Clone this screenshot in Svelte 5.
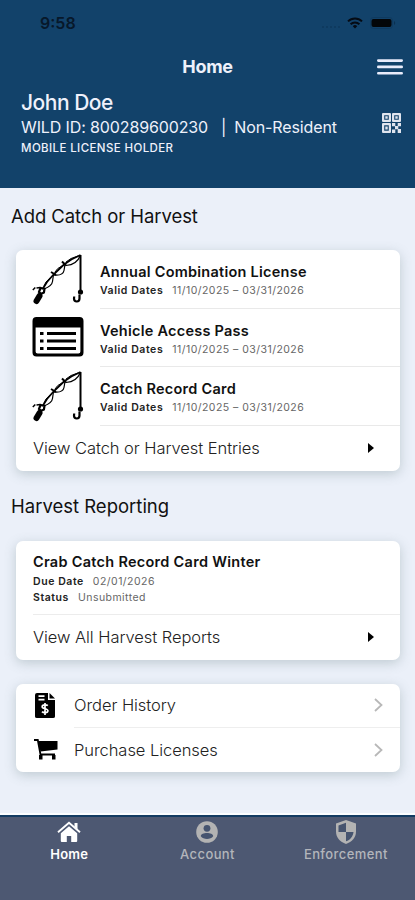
<script>
	const licenses = [
		{ name: 'Annual Combination License', icon: 'rod', dates: '11/10/2025 – 03/31/2026' },
		{ name: 'Vehicle Access Pass', icon: 'pass', dates: '11/10/2025 – 03/31/2026' },
		{ name: 'Catch Record Card', icon: 'rod', dates: '11/10/2025 – 03/31/2026' }
	];
</script>

<div class="screen">
	<header>
		<div class="status-bar">
			<span class="time">9:58</span>
			<div class="status-icons">
				<span class="signal"></span>
				<svg width="16" height="12" viewBox="0 0 16 12" fill="none" stroke="#050b14" stroke-width="2">
					<path d="M1 4.4a10 10 0 0 1 14 0M3.6 7.2a6.3 6.3 0 0 1 8.8 0" />
					<path d="M8 11.5 5.8 9.3a3 3 0 0 1 4.4 0z" fill="#050b14" stroke="none" />
				</svg>
				<svg class="battery" width="26" height="12" viewBox="0 0 26 12">
					<rect x=".5" y=".5" width="22" height="11" rx="3" fill="none" stroke="#0f3a5f" />
					<rect x="1.5" y="2" width="20" height="8" rx="2" fill="#030609" />
					<path d="M24 4v4c1.6-.6 1.6-3.4 0-4z" fill="#0b3151" />
				</svg>
			</div>
		</div>
		<div class="title-bar">
			<h1>Home</h1>
			<svg class="menu" width="26" height="16" viewBox="0 0 26 16" stroke="#e9ecfb" stroke-width="2.6" stroke-linecap="round">
				<path d="M1.3 1.6h23.4M1.3 7.9h23.4M1.3 14.2h23.4" />
			</svg>
		</div>
		<div class="holder">
			<div>
				<div class="holder-name">John Doe</div>
				<div class="holder-id"><span>WILD ID: 800289600230</span><span class="bar">|</span><span>Non-Resident</span></div>
				<div class="holder-type">MOBILE LICENSE HOLDER</div>
			</div>
			<svg class="qr" width="19" height="20" viewBox="0 0 19 20" fill="#dfe4ee">
				<path fill-rule="evenodd" d="M0 1q0-1 1-1h7q1 0 1 1v7q0 1-1 1H1q-1 0-1-1zM2.200 2.200v4.600h4.600V2.200zM10 1q0-1 1-1h7q1 0 1 1v7q0 1-1 1h-7q-1 0-1-1zM12.200 2.200v4.600h4.600V2.200zM0 11q0-1 1-1h7q1 0 1 1v8q0 1-1 1H1q-1 0-1-1zM2.200 12.200v5.600h4.600v-5.600z" />
				<path d="M3.300 3.300h2.400v2.400H3.300zM13.300 3.300h2.400v2.400h-2.400zM3.300 13.500h2.400v3H3.300zM10 10h3.300v3.300H10zM15.700 10H19v3.300h-3.300zM13 13h3.300v3.300H13zM10 16.500h3.300V20H10zM15.700 16H19v4h-3.300z" />
			</svg>
		</div>
	</header>

	<main>
		<h2>Add Catch or Harvest</h2>
		<section class="card">
			{#each licenses as license}
				<div class="license">
					<div class="license-icon">
						{#if license.icon === 'rod'}
							<svg width="52" height="53" viewBox="0 0 52 53" fill="none" stroke="#000">
								<path d="M48.500 2v37" stroke-width="2" />
								<path d="M10 37 15 29 22 21 32 11.500Q39 6 48.500 2" stroke-width="1.800" />
								<path d="M12 36q8-3 8.500-7.500.5-3.500 1-7M22 22q9 1 10-4.500.5-3 1-6M34 12.500q11-1 14-9.500" stroke-width="1.200" />
								<path d="M19 19l5 3M30 8.500l4 4" stroke-width="2" />
								<path d="M12 33q1-4 6-8M23 19q2-4 7-6M34 9q4-4 12-6" stroke-width="1" />
								<path d="M.8 37l2.500-2.500M4.500 35l4-.5" stroke-width="1.500" />
								<path d="M7.500 43 4.500 48" stroke-width="6" stroke-linecap="round" />
								<path d="M7 39l1.500-4 4 .8-.6 3.700-3 1.500z" fill="#fff" stroke-width="2.200" />
								<circle cx="48.500" cy="39" r="2.600" fill="#000" stroke="none" />
								<path d="M47.500 41.500v4q0 3-2.700 3-2.800 0-2.800-3l.2-2" stroke-width="2.200" />
							</svg>
						{:else}
							<svg class="pass" width="52" height="40" viewBox="0 0 52 40">
								<path fill-rule="evenodd" d="M4.500 0h43q4 0 4 4v31.500q0 4-4 4h-43q-4 0-4-4V4q0-4 4-4zM3.600 10.500v24q0 2 2 2h40.800q2 0 2-2v-24z" />
								<path d="M8 15h3.500v3H8zM8 22.500h3.500v3H8zM8 30h3.500v3H8zM15 15h29v3H15zM15 22.500h29v3H15zM15 30h29v3H15z" />
							</svg>
						{/if}
					</div>
					<div class="license-info">
						<h3>{license.name}</h3>
						<p><b>Valid Dates</b>{license.dates}</p>
					</div>
				</div>
			{/each}
			<div class="view-row">
				<span>View Catch or Harvest Entries</span>
				<svg width="6" height="10" viewBox="0 0 6 10"><path d="M0 0l6 5-6 5z" /></svg>
			</div>
		</section>

		<h2 class="reporting">Harvest Reporting</h2>
		<section class="card">
			<div class="report">
				<h3>Crab Catch Record Card Winter</h3>
				<p><b>Due Date</b>02/01/2026</p>
				<p><b>Status</b>Unsubmitted</p>
			</div>
			<div class="view-row">
				<span>View All Harvest Reports</span>
				<svg width="6" height="10" viewBox="0 0 6 10"><path d="M0 0l6 5-6 5z" /></svg>
			</div>
		</section>

		<section class="card links">
			<div class="link">
				<svg class="link-icon" width="20" height="26" viewBox="0 0 20 26">
					<path d="M2 0h11v7h7v16.500q0 1.500-2 1.500H2q-2 0-2-1.500V2q0-2 2-2z" />
					<path d="M14.500 0 20 5.500h-5.500z" />
					<path d="M3.500 3.200h6M3.500 6.700h6" stroke="#fff" stroke-width="1.700" />
					<path d="M12.800 12.600c-1-1-5.600-1.300-5.600 1.100 0 2.500 5.700 1.600 5.700 4.100 0 2.400-4.700 2.200-5.900.8M10 10v12" fill="none" stroke="#fff" stroke-width="1.700" />
				</svg>
				<div class="link-text">
					<span>Order History</span>
					<svg width="9" height="14" viewBox="0 0 9 14" fill="none" stroke="#b8b8b8" stroke-width="1.800"><path d="M1 1l6.500 6L1 13" /></svg>
				</div>
			</div>
			<div class="link">
				<svg class="link-icon cart" width="24" height="21" viewBox="0 0 24 21">
					<path d="M4 2h19.500v8.500L6.500 12.500z" />
					<path d="M0 1h3.800L6.500 15.500H21" fill="none" stroke="#000" stroke-width="1.800" />
					<path d="M5 16h3.500v4.500H5zM18 16h3.500v4.500H18z" />
				</svg>
				<div class="link-text">
					<span>Purchase Licenses</span>
					<svg width="9" height="14" viewBox="0 0 9 14" fill="none" stroke="#b8b8b8" stroke-width="1.800"><path d="M1 1l6.500 6L1 13" /></svg>
				</div>
			</div>
		</section>
	</main>

	<nav>
		<div class="tab active">
			<svg width="24" height="22" viewBox="0 0 24 22" fill="#fff">
				<path d="M12 5.200 3.800 12.300V20q0 1 1 1h5v-6h4.400v6h5q1 0 1-1v-7.700z" />
				<path d="M17.500 2h3v6.500l-3-2.600z" />
				<path d="M1 11.300 12 1.800l11 9.500" fill="none" stroke="#fff" stroke-width="1.900" />
			</svg>
			<span>Home</span>
		</div>
		<div class="tab">
			<svg width="22" height="22" viewBox="0 0 22 22">
				<circle cx="11" cy="11" r="10.800" fill="#b3b3b3" />
				<circle cx="11" cy="7.300" r="3.400" fill="#46546f" />
				<path d="M4.800 15.300c0-4.300 12.400-4.300 12.400 0-2.600 3.600-9.800 3.600-12.400 0z" fill="#46546f" />
			</svg>
			<span>Account</span>
		</div>
		<div class="tab">
			<svg width="20" height="24" viewBox="0 0 20 24">
				<path d="M10 0l10 3.600v8C20 17.500 16 22.300 10 24 4 22.300 0 17.500 0 11.600v-8z" fill="#b3b3b3" />
				<path d="M10 2.800v9.200H2.500V5.500zM10 12h7.500c-.4 4.200-3.300 8-7.500 9.300z" fill="#46546f" />
			</svg>
			<span>Enforcement</span>
		</div>
	</nav>
</div>

<style>
	:global(body) {
		margin: 0;
		background: #ebf0f9;
	}

	.screen {
		width: 415px;
		height: 900px;
		display: flex;
		flex-direction: column;
		overflow: hidden;
		font-family: Inter, 'Liberation Sans', sans-serif;
		color: #111;
		background: #ebf0f9;
	}

	svg {
		display: block;
		flex: none;
	}

	h1,
	h2,
	h3,
	p {
		margin: 0;
	}

	header {
		height: 188px;
		flex: none;
		background: #12426a;
		color: #eef1fb;
	}

	.status-bar {
		height: 46px;
		display: flex;
		justify-content: space-between;
		align-items: center;
		padding: 0 20px 0 40px;
		box-sizing: border-box;
		color: #07182a;
	}

	.time {
		font-size: 16px;
		font-weight: 600;
	}

	.status-icons {
		display: flex;
		align-items: center;
		gap: 7px;
	}

	.battery {
		margin-right: -1px;
	}

	.signal {
		width: 18px;
		border-bottom: 2px dotted #0e3a5f;
		margin-top: 7px;
	}

	.title-bar {
		height: 42px;
		display: grid;
		grid-template-columns: 1fr auto 1fr;
		align-items: center;
		padding: 0 12px;
	}

	h1 {
		grid-column: 2;
		font-size: 18px;
		font-weight: 700;
		line-height: 22px;
		letter-spacing: -0.3px;
	}

	.menu {
		justify-self: end;
	}

	.holder {
		display: flex;
		justify-content: space-between;
		padding: 2px 14px 0 21px;
	}

	.holder-name {
		font-size: 21px;
		font-weight: 500;
		line-height: 26px;
		letter-spacing: -0.5px;
	}

	.holder-id {
		display: flex;
		font-size: 16px;
		line-height: 22px;
		letter-spacing: -0.12px;
	}

	.bar {
		margin: 0 8px 0 13px;
	}

	.holder-type {
		font-size: 11.5px;
		font-weight: 500;
		line-height: 20px;
		letter-spacing: 0.39px;
	}

	.qr {
		margin-top: 23px;
	}

	main {
		flex: 1;
	}

	h2 {
		height: 62px;
		box-sizing: border-box;
		padding: 16px 0 0 11px;
		font-size: 18.5px;
		font-weight: 400;
		line-height: 24px;
		letter-spacing: -0.08px;
	}

	h2.reporting {
		height: 70px;
		padding-top: 23px;
		letter-spacing: 0;
	}

	.card {
		margin: 0 15px 0 16px;
		border-radius: 7px;
		background: #fff;
		box-shadow: 0 3px 12px rgba(90, 115, 120, 0.3);
	}

	.license {
		height: 58.7px;
		display: flex;
	}

	.license-icon {
		width: 84px;
		padding: 3px 0 0 16px;
		box-sizing: border-box;
	}

	.pass {
		margin-top: 5px;
	}

	.license-info {
		flex: 1;
		padding-top: 12px;
		border-bottom: 1px solid #e9e9e9;
	}

	h3 {
		font-size: 14.5px;
		font-weight: 600;
		line-height: 20px;
		letter-spacing: 0.25px;
	}

	p {
		font-size: 10.5px;
		line-height: 16px;
		letter-spacing: 0.46px;
		margin-top: 1px;
		color: #666;
	}

	p b {
		margin-right: 9px;
		font-weight: 600;
		letter-spacing: 0.57px;
		color: #222;
	}

	.view-row {
		height: 44.5px;
		display: flex;
		align-items: center;
		justify-content: space-between;
		padding: 0 26px 0 17px;
		font-size: 16.5px;
		font-weight: 300;
		letter-spacing: -0.06px;
		color: #222;
	}

	.report {
		height: 74.5px;
		box-sizing: border-box;
		margin-left: 17px;
		padding-top: 11px;
		border-bottom: 1px solid #ececec;
	}

	.report p {
		margin-top: 0;
	}

	.report h3 {
		margin-bottom: 2px;
		letter-spacing: 0.28px;
	}

	.links {
		margin-top: 24px;
		height: 88px;
	}

	.link {
		height: 44px;
		display: grid;
		grid-template-columns: 58px 1fr;
		align-items: center;
	}

	.link-icon {
		margin-left: 19px;
	}

	.link-icon.cart {
		margin-left: 18px;
	}

	.link-text {
		height: 44px;
		box-sizing: border-box;
		display: flex;
		align-items: center;
		justify-content: space-between;
		padding-right: 17px;
		font-size: 16.5px;
		font-weight: 300;
		letter-spacing: -0.06px;
		color: #222;
		border-bottom: 1px solid #eee;
	}

	.link + .link .link-text {
		border-bottom: 0;
	}

	nav {
		height: 85px;
		box-sizing: border-box;
		display: grid;
		grid-template-columns: repeat(3, 1fr);
		padding-top: 3px;
		border-top: 2px solid #123b62;
		background: #4d5872;
		box-shadow: 0 -2px 0 #fbfdff;
	}

	.tab {
		display: flex;
		flex-direction: column;
		align-items: center;
		font-size: 13px;
		font-weight: 500;
		letter-spacing: 0.4px;
		color: #b3b5bb;
	}

	.tab svg {
		height: 24px;
	}

	.tab span {
		margin-top: 1px;
		line-height: 18px;
	}

	.tab.active {
		font-weight: 600;
		letter-spacing: 0.2px;
		color: #fff;
	}
</style>
